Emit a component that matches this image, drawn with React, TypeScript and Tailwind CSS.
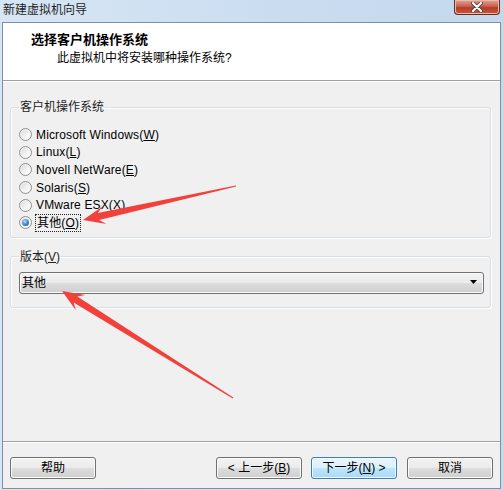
import type { ReactNode } from 'react';

type Pt = [number, number];

// tapered annotation arrow, like the ones screenshot tools draw
const arrowPoints = (tail: Pt, tip: Pt, head = 22, barb = 9, neck = 3.5, end = 0.6) => {
  const dx = tip[0] - tail[0];
  const dy = tip[1] - tail[1];
  const len = Math.hypot(dx, dy);
  const ux = dx / len;
  const uy = dy / len;
  const nx = -uy;
  const ny = ux;
  const at = (back: number, side: number): Pt => [tip[0] - ux * back + nx * side, tip[1] - uy * back + ny * side];
  const pts: Pt[] = [
    [tail[0] + nx * end, tail[1] + ny * end],
    at(head * 0.72, neck),
    at(head, barb),
    tip,
    at(head, -barb),
    at(head * 0.72, -neck),
    [tail[0] - nx * end, tail[1] - ny * end],
  ];
  return pts.map((p) => p.map((v) => v.toFixed(1)).join(',')).join(' ');
};

const Radio = ({ label, checked, focus }: { label: ReactNode; checked?: boolean; focus?: boolean }) => (
  <div className="flex items-center h-[17.6px]">
    <div className="w-[13px] h-[13px] rounded-full border border-[#8f9092] bg-[linear-gradient(135deg,#d6d6d6,#f4f4f4_60%,#ffffff)] shadow-[inset_0_0_0_1px_#f6f6f6] flex items-center justify-center shrink-0">
      {checked && (
        <div className="w-[7px] h-[7px] rounded-full bg-[radial-gradient(circle_at_40%_35%,#b9def8,#3b82c4_55%,#17457f)]" />
      )}
    </div>
    <span
      className={
        focus
          ? 'ml-[3px] px-[1px] leading-[16px] tracking-[0.15px] border border-dotted border-[#222]'
          : 'ml-[4px] leading-[16px] tracking-[0.15px]'
      }
    >
      {label}
    </span>
  </div>
);

const WinButton = ({ children, primary }: { children: ReactNode; primary?: boolean }) => (
  <button
    className={
      primary
        ? 'w-[86px] h-[22px] rounded-[3px] border border-[#3c7fb1] bg-[linear-gradient(#eaf6fd,#d9f0fc_50%,#bee6fd_50%,#a7d9f5)] shadow-[inset_0_0_0_1px_#f2fafe] text-[12px] text-black'
        : 'w-[86px] h-[22px] rounded-[3px] border border-[#707070] bg-[linear-gradient(#f2f2f2,#ebebeb_50%,#dddddd_50%,#cfcfcf)] shadow-[inset_0_0_0_1px_#fbfbfb] text-[12px] text-black'
    }
  >
    {children}
  </button>
);

export default function App() {
  return (
    <div className="relative w-[503px] h-[490px] overflow-hidden bg-[linear-gradient(90deg,#d7e6f5,#c9dcf0_60%,#c4d8ee)] font-['Liberation_Sans','Noto_Sans_CJK_SC',sans-serif] text-[12px] text-black">
      {/* title bar */}
      <div className="h-[22px] flex items-start justify-between pl-[3px] pr-[3px]">
        <span className="mt-[3px] leading-[15px] text-[12px] text-[#1e1e1e]">新建虚拟机向导</span>
        <div className="w-[46px] h-[15px] rounded-b-[4px] border border-t-0 border-[#6b2b21] bg-[linear-gradient(#dfa898,#c8604b_45%,#b73b22_55%,#c55a3e)] shadow-[inset_0_0_0_1px_#e9b9ab] flex items-center justify-center">
          <svg width="12" height="10" viewBox="0 0 12 10">
            <path d="M2 1 L10 9 M10 1 L2 9" stroke="#5a4a48" strokeWidth="4" strokeLinecap="round" />
            <path d="M2 1 L10 9 M10 1 L2 9" stroke="#ffffff" strokeWidth="2" strokeLinecap="round" />
          </svg>
        </div>
      </div>

      {/* dialog body */}
      <div className="ml-[2px] w-[499px] h-[467px] border border-[#7d8fa5] bg-[#f0f0f0] flex flex-col">
        <div className="h-[58px] bg-white border-b border-[#a0a0a0] flex flex-col pl-[28px] pt-[9px]">
          <div className="font-bold text-[13px] leading-[16px]">选择客户机操作系统</div>
          <div className="ml-[26px] mt-[2px] leading-[16px]">此虚拟机中将安装哪种操作系统?</div>
        </div>
        <div className="flex-1 border-t border-white pl-[7px] pr-[9px] pt-[17px]">
          <fieldset className="rounded-[3px] border border-[#d5dfe5] shadow-[1px_1px_0_#fff,inset_1px_1px_0_#fff] pl-[8px] pr-[6px] pb-[5px]">
            <legend className="px-[1px] leading-[16px] text-[#1e1e1e]">客户机操作系统</legend>
            <div className="mt-[11px] flex flex-col">
              <Radio label={<>Microsoft Windows(<u>W</u>)</>} />
              <Radio label={<>Linux(<u>L</u>)</>} />
              <Radio label={<>Novell NetWare(<u>E</u>)</>} />
              <Radio label={<>Solaris(<u>S</u>)</>} />
              <Radio label={<>VMware ESX(<u>X</u>)</>} />
              <Radio label={<>其他(<u>O</u>)</>} checked focus />
            </div>
          </fieldset>

          <fieldset className="mt-[11px] rounded-[3px] border border-[#d5dfe5] shadow-[1px_1px_0_#fff,inset_1px_1px_0_#fff] pl-[8px] pr-[6px] pb-[13px]">
            <legend className="px-[1px] leading-[16px] text-[#1e1e1e]">
              版本(<u>V</u>)
            </legend>
            <div className="mt-[7px] h-[22px] rounded-[3px] border border-[#707070] bg-[linear-gradient(#f2f2f2,#ebebeb_50%,#dddddd_50%,#cfcfcf)] shadow-[inset_0_0_0_1px_#fbfbfb] flex items-center justify-between pl-[2px] pr-[5px]">
              <span className="leading-[16px]">其他</span>
              <svg width="8" height="5" viewBox="0 0 8 5">
                <path d="M0 0 H7 L3.5 4 Z" fill="#000" />
              </svg>
            </div>
          </fieldset>
        </div>
        <div className="border-t border-[#a0a0a0]">
          <div className="border-t border-white flex items-center px-[7px] pt-[14px] pb-[9px]">
            <WinButton>帮助</WinButton>
            <div className="flex-1" />
            <div className="flex gap-[9px]">
              <WinButton>
                &lt; 上一步(<u>B</u>)
              </WinButton>
              <WinButton primary>
                下一步(<u>N</u>) &gt;
              </WinButton>
              <div className="ml-[1px]">
                <WinButton>取消</WinButton>
              </div>
            </div>
          </div>
        </div>
      </div>

      {/* red annotation arrows drawn over the screenshot */}
      <svg className="absolute left-0 top-0 pointer-events-none" width="503" height="490">
        <polygon points={arrowPoints([236, 186], [83, 220])} fill="#f2403b" />
        <polygon points={arrowPoints([233, 398], [62, 291])} fill="#f2403b" />
      </svg>
    </div>
  );
}
